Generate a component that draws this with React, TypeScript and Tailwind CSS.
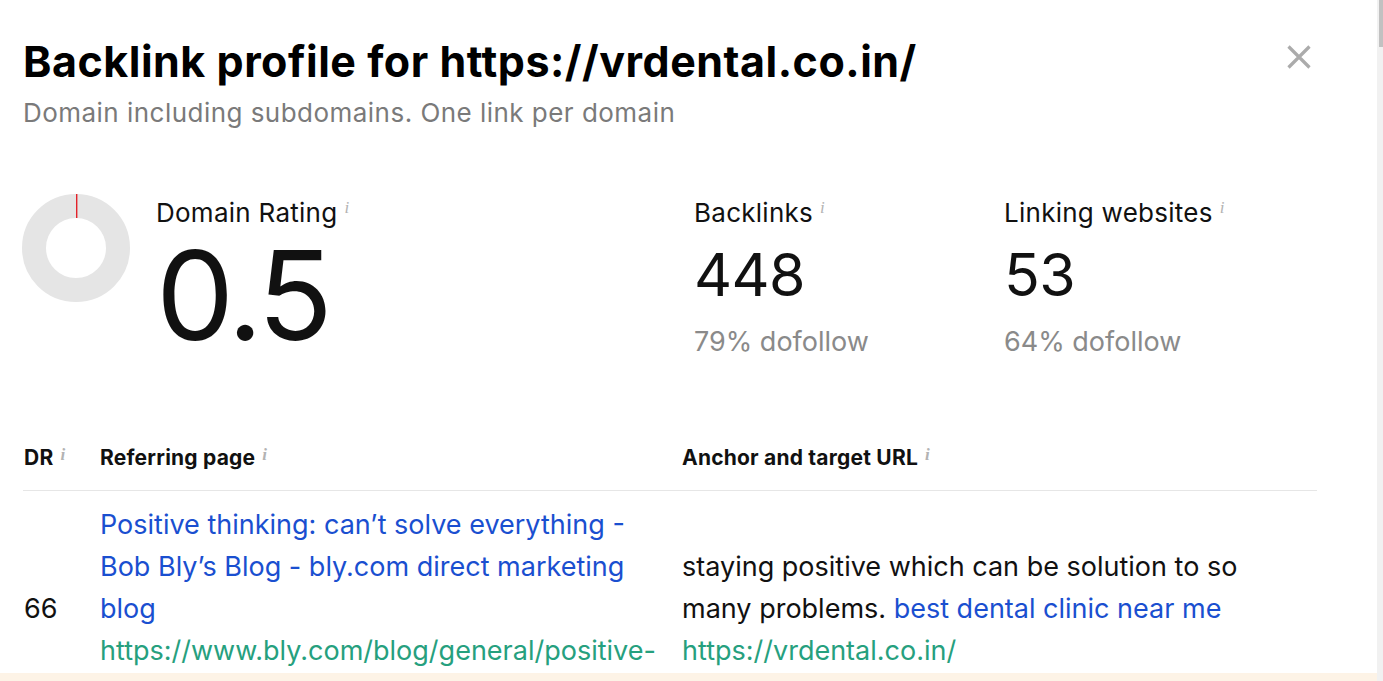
const Info = () => (
  <span className="ml-[7px] inline-block align-top font-['Liberation_Serif',serif] text-[17px] italic leading-none text-[#b3b3b3]">i</span>
);

type Stat = { label: string; value: string; sub: string };

const STATS: Stat[] = [
  { label: 'Backlinks', value: '448', sub: '79% dofollow' },
  { label: 'Linking websites', value: '53', sub: '64% dofollow' }
];

function Donut() {
  // ring with a thin red tick for a DR of 0.5
  return (
    <svg width="108" height="108" viewBox="0 0 108 108" className="-ml-[1px] shrink-0">
      <circle cx="54" cy="54" r="42" fill="none" stroke="#e5e5e5" strokeWidth="24" />
      <rect x="54" y="0" width="1.4" height="24" fill="#e3222a" />
    </svg>
  );
}

export default function App() {
  return (
    <div className="flex h-screen w-full overflow-hidden bg-white font-['Inter',sans-serif] text-[#111]">
      <div className="flex min-w-0 flex-1 flex-col">
        <main className="min-h-0 flex-1 overflow-hidden pl-[23px] pr-[60px]">
          <header className="flex items-start justify-between pt-[37px]">
            <h1 className="text-[43px] font-bold leading-[48px] tracking-[0.012em] text-black">
              Backlink profile for https://vrdental.co.in/
            </h1>
            <button className="mr-[6px] mt-[8px]">
              <svg width="24" height="24" viewBox="0 0 24 24">
                <path d="M1.5 1.5 22.5 22.5M22.5 1.5 1.5 22.5" stroke="#ababab" strokeWidth="3.2" />
              </svg>
            </button>
          </header>
          <p className="mt-[14px] text-[26px] leading-[28px] tracking-[0.018em] text-[#7a7a7a]">
            Domain including subdomains. One link per domain
          </p>

          <section className="mt-[67px] flex">
            <div className="flex w-[671px] gap-[26px]">
              <Donut />
              <div className="pt-[5px]">
                <div className="text-[26px] leading-[28px] tracking-[0.01em]">
                  Domain Rating
                  <Info />
                </div>
                <div className="mt-[6px] text-[124px] leading-[124px] tracking-[-0.03em]">0.5</div>
              </div>
            </div>
            {STATS.map((s) => (
              <div key={s.label} className="w-[310px] pt-[5px]">
                <div className="text-[26px] leading-[28px] tracking-[0.01em]">
                  {s.label}
                  <Info />
                </div>
                <div className="mt-[16px] text-[59px] leading-[64px] tracking-[-0.01em]">{s.value}</div>
                <div className="mt-[19px] text-[27px] leading-[32px] text-[#8a8a8a]">{s.sub}</div>
              </div>
            ))}
          </section>

          <table className="mt-[88px] w-full border-collapse">
            <thead>
              <tr className="border-b border-[#e6e6e6]">
                <th className="w-[77px] pb-[20px] pl-[1px] text-left text-[21px] font-bold leading-[24px] tracking-[0.01em]">
                  DR
                  <Info />
                </th>
                <th className="w-[582px] pb-[20px] text-left text-[21px] font-bold leading-[24px] tracking-[0.01em]">
                  Referring page
                  <Info />
                </th>
                <th className="pb-[20px] text-left text-[21px] font-bold leading-[24px] tracking-[0.01em]">
                  Anchor and target URL
                  <Info />
                </th>
              </tr>
            </thead>
            <tbody>
              <tr className="align-middle text-[27px] leading-[42px]">
                <td className="pl-[1px] pt-[13px]">66</td>
                <td className="pr-[22px] pt-[13px]">
                  <div className="text-[#1a4fd0]">
                    Positive thinking: can’t solve everything - Bob Bly’s Blog - bly.com direct marketing blog
                  </div>
                  <div className="text-[#26a07e]">
                    https://www.bly.com/blog/general/positive-thinking-cant-solve-everything/
                  </div>
                </td>
                <td className="pr-[35px] pt-[13px]">
                  <div>
                    staying positive which can be solution to so many problems.{' '}
                    <span className="text-[#1a4fd0]">best dental clinic near me</span>
                  </div>
                  <div className="text-[#26a07e]">https://vrdental.co.in/</div>
                </td>
              </tr>
            </tbody>
          </table>
        </main>
        <div className="h-[8px] shrink-0 bg-[#fdf3e6]" />
      </div>
      <div className="flex w-[6px] shrink-0 justify-end bg-[#f1f1f1]">
        <div className="h-[47px] w-[4px] bg-[#c1c1c1]" />
      </div>
    </div>
  );
}
